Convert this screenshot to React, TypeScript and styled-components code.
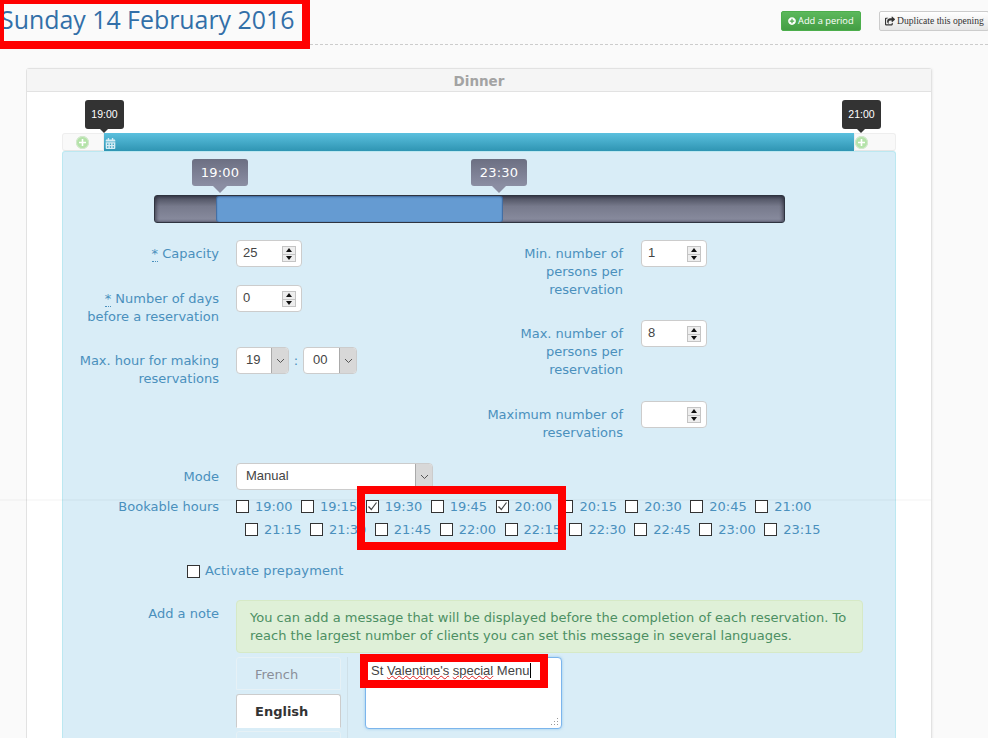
import React from "react";
import styled, { createGlobalStyle } from "styled-components";
import { FaCalendarAlt, FaPlusCircle, FaShareSquare } from "react-icons/fa";

const GlobalStyle = createGlobalStyle`
  html, body {
    margin: 0;
    padding: 0;
    background: #fafafa;
    overflow: hidden;
  }
  * {
    box-sizing: border-box;
  }
`;

const Page = styled.div`
  position: relative;
  width: 988px;
  height: 738px;
  overflow: hidden;
  background: #fafafa;
  font-family: "DejaVu Sans", Verdana, sans-serif;
  font-size: 13px;
  line-height: 18px;
`;

const Header = styled.div`
  display: flex;
  align-items: flex-start;
  height: 45px;
  border-bottom: 1px dashed #ccc;
`;

const Title = styled.h1`
  flex: 1;
  margin: 0;
  font-family: "Open Sans", sans-serif;
  font-size: 24.9px;
  font-weight: 400;
  line-height: 38px;
  color: #326fa8;
`;

const AddButton = styled.div`
  display: flex;
  align-items: center;
  gap: 2px;
  width: 80px;
  height: 20px;
  margin-top: 11px;
  padding-left: 6px;
  border: 1px solid #4cae4c;
  border-radius: 2px;
  background: linear-gradient(#5cb85c, #449d44);
  color: #fff;
  font-family: "Open Sans", sans-serif;
  font-size: 9.3px;
  white-space: nowrap;

  svg {
    flex: none;
  }
`;

const DuplicateButton = styled.div`
  display: flex;
  align-items: center;
  gap: 2px;
  width: 110px;
  height: 20px;
  margin: 11px -1px 0 18px;
  padding-left: 5px;
  border: 1px solid #ccc;
  border-radius: 2px;
  background: linear-gradient(#fff, #e6e6e6);
  color: #333;
  font-family: "Liberation Serif", serif;
  font-size: 9.6px;
  white-space: nowrap;

  svg {
    flex: none;
  }
`;

const Card = styled.div`
  width: 906px;
  margin: 23px 0 0 26px;
  border: 1px solid #e2e2e2;
  border-radius: 3px 3px 0 0;
  background: #fff;
  box-shadow: 1px 0 2px rgba(0, 0, 0, 0.05);
`;

const CardTitle = styled.div`
  height: 23px;
  border-bottom: 1px solid #e2e2e2;
  background: #f5f5f5;
  color: #a3a3a3;
  font-weight: 700;
  font-size: 13.5px;
  line-height: 25px;
  text-align: center;
`;

const CardBody = styled.div`
  padding: 41px 35px 0;
`;

const Timeline = styled.div`
  position: relative;
  display: flex;
  height: 18px;
`;

const TimelineEnd = styled.div<{ $side: "left" | "right" }>`
  display: flex;
  align-items: center;
  width: 42px;
  padding-left: ${({ $side }) => ($side === "left" ? "13px" : "0")};
  border: 1px solid #eee;
  border-bottom-color: #e6e6e6;
  border-radius: ${({ $side }) =>
    $side === "left" ? "3px 0 0 3px" : "0 3px 3px 0"};
  background: #f9f9f9;
`;

const PlusDot = styled.div`
  display: flex;
  align-items: center;
  justify-content: center;
  width: 13px;
  height: 13px;
  border-radius: 50%;
  background: #b4e3a9;
  box-shadow: 0 0 0 1px #d5e8d0 inset;
`;

const TimelineBar = styled.div`
  flex: 1;
  display: flex;
  align-items: center;
  padding: 2px 0 0 1px;
  background: linear-gradient(#5bc0de, #2f95b3);
  color: #d7edf5;
`;

const DarkTip = styled.div<{ $left: number }>`
  position: absolute;
  top: -33px;
  left: ${({ $left }) => $left}px;
  width: 39px;
  height: 29px;
  border-radius: 3px;
  background: #333;
  color: #fff;
  font-family: "Liberation Sans", Arial, sans-serif;
  font-size: 10.5px;
  line-height: 29px;
  text-align: center;

  &::after {
    content: "";
    position: absolute;
    left: 15px;
    bottom: -4px;
    border-style: solid;
    border-width: 4px 4px 0;
    border-color: #333 transparent transparent;
  }
`;

const Panel = styled.div`
  height: 600px;
  border: 1px solid #bce8f1;
  border-bottom: 0;
  border-radius: 3px 3px 0 0;
  background: #d9edf7;
`;

const Track = styled.div`
  position: relative;
  display: flex;
  width: 631px;
  height: 28px;
  margin: 43px 0 17px 91px;
  border: 1px solid #2f3440;
  border-radius: 3px;
  background: linear-gradient(#474a59, #777a8c 40%, #8a8da0);
  box-shadow: inset 2px 0 3px rgba(30, 32, 45, 0.45),
    inset -2px 0 3px rgba(30, 32, 45, 0.45);
`;

const TrackRange = styled.div`
  width: 287px;
  margin-left: 61px;
  border-radius: 3px;
  background: #659bd2;
  box-shadow: inset 0 1px 2px rgba(30, 60, 110, 0.5),
    inset 1px 0 1px rgba(30, 60, 110, 0.4),
    inset -1px 0 1px rgba(30, 60, 110, 0.4);
`;

const SliderTip = styled.div<{ $left: number }>`
  position: absolute;
  top: -37px;
  left: ${({ $left }) => $left}px;
  width: 56px;
  height: 27px;
  border-radius: 3px;
  background: linear-gradient(#6c6f82, #8b8ea3);
  color: #fff;
  font-size: 13px;
  line-height: 27px;
  letter-spacing: 0.2px;
  text-align: center;

  &::after {
    content: "";
    position: absolute;
    left: 21px;
    bottom: -7px;
    border-style: solid;
    border-width: 7px 7px 0;
    border-color: #8b8ea3 transparent transparent;
  }
`;

const Columns = styled.div`
  display: flex;
`;

const Column = styled.div<{ $width?: number }>`
  width: ${({ $width }) => ($width ? `${$width}px` : "auto")};
`;

const Row = styled.div<{ $mb?: number }>`
  display: flex;
  align-items: flex-start;
  margin-bottom: ${({ $mb }) => $mb ?? 22}px;
`;

const Label = styled.label<{ $width?: number; $pt?: number }>`
  flex: none;
  width: ${({ $width }) => $width ?? 156}px;
  padding-top: ${({ $pt }) => $pt ?? 5}px;
  color: #4a90bd;
  text-align: right;
`;

const Required = styled.abbr`
  border-bottom: 1px dotted #4a90bd;
  text-decoration: none;
`;

const Control = styled.div<{ $ml?: number }>`
  margin-left: ${({ $ml }) => $ml ?? 17}px;
`;

const NumberBox = styled.div`
  position: relative;
  width: 66px;
  height: 27px;
  padding-left: 6px;
  border: 1px solid #ccc;
  border-radius: 4px;
  background: #fff;
  color: #444;
  font-family: "Liberation Sans", Arial, sans-serif;
  font-size: 13px;
  line-height: 24px;
`;

const Spinner = styled.div`
  position: absolute;
  top: 5px;
  right: 5px;
  display: flex;
  flex-direction: column;
  gap: 1px;
  width: 14px;
  height: 16px;
  border: 1px solid #c4c4c4;
  background: #c4c4c4;
`;

const SpinButton = styled.div<{ $up?: boolean }>`
  flex: 1;
  display: flex;
  align-items: center;
  justify-content: center;
  background: #eee;

  &::after {
    content: "";
    border-style: solid;
    border-width: ${({ $up }) => ($up ? "0 3px 4px" : "4px 3px 0")};
    border-color: ${({ $up }) =>
      $up
        ? "transparent transparent #111"
        : "#111 transparent transparent"};
  }
`;

const SelectBox = styled.div<{ $width: number }>`
  display: flex;
  width: ${({ $width }) => $width}px;
  height: 27px;
  border: 1px solid #ccc;
  border-radius: 4px;
  overflow: hidden;
  background: #fff;
  color: #444;
  font-family: "Liberation Sans", Arial, sans-serif;
  font-size: 13px;
  line-height: 24px;
`;

const SelectValue = styled.div`
  flex: 1;
  padding-left: 9px;
`;

const SelectArrow = styled.div`
  display: flex;
  align-items: center;
  justify-content: center;
  width: 17px;
  border-left: 1px solid #aaa;
  background: #d8d8d8;
`;

const TimeSelects = styled.div`
  display: flex;
  align-items: center;
  color: #4a90bd;
`;

const Colon = styled.span`
  width: 14px;
  text-align: center;
`;

const HourRow = styled.div<{ $indent?: number }>`
  display: flex;
  height: 23px;
  padding-left: ${({ $indent }) => $indent ?? 0}px;
`;

const HourItem = styled.div`
  display: flex;
  align-items: center;
  gap: 6px;
  width: 64.9px;
  color: #4a90bd;
`;

const CheckBox = styled.span`
  display: flex;
  align-items: center;
  justify-content: center;
  flex: none;
  width: 13px;
  height: 13px;
  border: 1px solid #333;
  background: #fff;
`;

const PrepayRow = styled.div`
  display: flex;
  align-items: center;
  gap: 5px;
  height: 18px;
  margin: 21px 0 20px 124px;
  color: #4a90bd;
  letter-spacing: 0.1px;
`;

const NoteColumn = styled.div`
  width: 627px;
  margin-left: 17px;
`;

const Alert = styled.div`
  height: 53px;
  margin-bottom: 4px;
  padding: 8px 13px;
  border: 1px solid #d6e9c6;
  border-radius: 4px;
  background: #dff0d8;
  color: #4c8f63;
`;

const NoteEditor = styled.div`
  display: flex;
  align-items: flex-start;
`;

const Tabs = styled.div`
  display: flex;
  flex-direction: column;
  width: 105px;
`;

const Tab = styled.div<{ $active?: boolean; $h: number }>`
  height: ${({ $h }) => $h}px;
  margin-bottom: ${({ $active }) => ($active ? "3px" : "4px")};
  padding: 8px 0 0 18px;
  border: 1px solid ${({ $active }) => ($active ? "#ccc" : "#e6f1f6")};
  border-bottom-color: ${({ $active }) => ($active ? "#fff" : "#e6f1f6")};
  border-radius: 3px 3px 0 0;
  background: ${({ $active }) => ($active ? "#fff" : "transparent")};
  color: ${({ $active }) => ($active ? "#333" : "#8b8f99")};
  font-weight: ${({ $active }) => ($active ? 700 : 400)};
`;

const TabDivider = styled.div`
  align-self: stretch;
  width: 1px;
  height: 90px;
  margin: 0 17px 0 6px;
  background: #cfe0e8;
`;

const NoteArea = styled.div`
  position: relative;
  width: 197px;
  height: 72px;
  padding: 4px 5px;
  border: 1px solid #7cb5ec;
  border-radius: 4px;
  background: #fff;
  box-shadow: 0 0 3px rgba(102, 175, 233, 0.6);
  color: #444;
  font-family: "Liberation Sans", Arial, sans-serif;
  font-size: 13px;
  line-height: 18px;
  white-space: nowrap;
`;

const Misspelled = styled.span`
  text-decoration: underline wavy #e02020 1px;
  text-underline-offset: 0;
`;

const Caret = styled.span`
  display: inline-block;
  width: 1px;
  height: 15px;
  margin-left: 1px;
  background: #000;
  vertical-align: -3px;
`;

const ResizeGrip = styled.svg`
  position: absolute;
  right: 2px;
  bottom: 2px;
`;

const RedFrame = styled.div<{ $x: number; $y: number; $w: number; $h: number }>`
  position: absolute;
  left: ${({ $x }) => $x}px;
  top: ${({ $y }) => $y}px;
  width: ${({ $w }) => $w}px;
  height: ${({ $h }) => $h}px;
  border: 8px solid #f00;
  pointer-events: none;
`;

const Seam = styled.div`
  position: absolute;
  left: 0;
  top: 499px;
  width: 931px;
  height: 2px;
  background: rgba(0, 0, 0, 0.025);
  pointer-events: none;
`;

const firstHours = ["19:00", "19:15", "19:30", "19:45", "20:00", "20:15", "20:30", "20:45", "21:00"];
const secondHours = ["21:15", "21:30", "21:45", "22:00", "22:15", "22:30", "22:45", "23:00", "23:15"];
const checkedHours = ["19:30", "20:00"];

const Chevron = () => (
  <svg width="9" height="6" viewBox="0 0 9 6">
    <path d="M1 1l3.5 3.5L8 1" fill="none" stroke="#555" strokeWidth="1" />
  </svg>
);

const Tick = () => (
  <svg width="11" height="11" viewBox="0 0 11 11">
    <path d="M1.5 5.5l2.8 3L9.5 1.5" fill="none" stroke="#444" strokeWidth="1.2" />
  </svg>
);

const Plus = () => (
  <svg width="9" height="9" viewBox="0 0 9 9">
    <path d="M4.5 1v7M1 4.5h7" stroke="#fff" strokeWidth="1.6" />
  </svg>
);

const NumberInput = ({ value }: { value?: string }) => (
  <NumberBox>
    {value}
    <Spinner>
      <SpinButton $up />
      <SpinButton />
    </Spinner>
  </NumberBox>
);

const Hours = ({ hours, indent }: { hours: string[]; indent?: number }) => (
  <HourRow $indent={indent}>
    {hours.map((hour) => (
      <HourItem key={hour}>
        <CheckBox>{checkedHours.includes(hour) && <Tick />}</CheckBox>
        {hour}
      </HourItem>
    ))}
  </HourRow>
);

const App: React.FC = () => {
  return (
    <Page>
      <GlobalStyle />
      <Header>
        <Title>Sunday 14 February 2016</Title>
        <AddButton>
          <FaPlusCircle size={8} />
          Add a period
        </AddButton>
        <DuplicateButton>
          <FaShareSquare size={10} />
          Duplicate this opening
        </DuplicateButton>
      </Header>

      <Card>
        <CardTitle>Dinner</CardTitle>
        <CardBody>
          <Timeline>
            <TimelineEnd $side="left">
              <PlusDot>
                <Plus />
              </PlusDot>
            </TimelineEnd>
            <TimelineBar>
              <FaCalendarAlt size={11} />
            </TimelineBar>
            <TimelineEnd $side="right">
              <PlusDot>
                <Plus />
              </PlusDot>
            </TimelineEnd>
            <DarkTip $left={23}>19:00</DarkTip>
            <DarkTip $left={780}>21:00</DarkTip>
          </Timeline>

          <Panel>
            <Track>
              <TrackRange />
              <SliderTip $left={37}>19:00</SliderTip>
              <SliderTip $left={316}>23:30</SliderTip>
            </Track>

            <Columns>
              <Column $width={420}>
                <Row $mb={18}>
                  <Label>
                    <Required>*</Required> Capacity
                  </Label>
                  <Control>
                    <NumberInput value="25" />
                  </Control>
                </Row>
                <Row $mb={21}>
                  <Label>
                    <Required>*</Required> Number of days before a reservation
                  </Label>
                  <Control>
                    <NumberInput value="0" />
                  </Control>
                </Row>
                <Row>
                  <Label>Max. hour for making reservations</Label>
                  <Control>
                    <TimeSelects>
                      <SelectBox $width={53}>
                        <SelectValue>19</SelectValue>
                        <SelectArrow>
                          <Chevron />
                        </SelectArrow>
                      </SelectBox>
                      <Colon>:</Colon>
                      <SelectBox $width={54}>
                        <SelectValue>00</SelectValue>
                        <SelectArrow>
                          <Chevron />
                        </SelectArrow>
                      </SelectBox>
                    </TimeSelects>
                  </Control>
                </Row>
              </Column>
              <Column>
                <Row $mb={21}>
                  <Label $width={140}>Min. number of persons per reservation</Label>
                  <Control $ml={18}>
                    <NumberInput value="1" />
                  </Control>
                </Row>
                <Row $mb={22}>
                  <Label $width={140}>Max. number of persons per reservation</Label>
                  <Control $ml={18}>
                    <NumberInput value="8" />
                  </Control>
                </Row>
                <Row $mb={21}>
                  <Label $width={140}>Maximum number of reservations</Label>
                  <Control $ml={18}>
                    <NumberInput />
                  </Control>
                </Row>
              </Column>
            </Columns>

            <Row $mb={5}>
              <Label>Mode</Label>
              <Control>
                <SelectBox $width={197}>
                  <SelectValue>Manual</SelectValue>
                  <SelectArrow>
                    <Chevron />
                  </SelectArrow>
                </SelectBox>
              </Control>
            </Row>

            <Row $mb={0}>
              <Label $pt={3}>Bookable hours</Label>
              <Control>
                <Hours hours={firstHours} />
                <Hours hours={secondHours} indent={9} />
              </Control>
            </Row>

            <PrepayRow>
              <CheckBox />
              Activate prepayment
            </PrepayRow>

            <Row $mb={0}>
              <Label>Add a note</Label>
              <NoteColumn>
                <Alert>
                  You can add a message that will be displayed before the
                  completion of each reservation. To reach the largest number of
                  clients you can set this message in several languages.
                </Alert>
                <NoteEditor>
                  <Tabs>
                    <Tab $h={33}>French</Tab>
                    <Tab $h={34} $active>
                      English
                    </Tab>
                    <Tab $h={30} />
                  </Tabs>
                  <TabDivider />
                  <NoteArea>
                    St <Misspelled>Valentine's</Misspelled>{" "}
                    <Misspelled>special</Misspelled> Menu
                    <Caret />
                    <ResizeGrip width="9" height="9" viewBox="0 0 9 9">
                      <path d="M7 1h1v1H7zM4 4h1v1H4zM7 4h1v1H7zM1 7h1v1H1zM4 7h1v1H4zM7 7h1v1H7z" fill="#999" />
                    </ResizeGrip>
                  </NoteArea>
                </NoteEditor>
              </NoteColumn>
            </Row>
          </Panel>
        </CardBody>
      </Card>

      <Seam />
      <RedFrame $x={-4} $y={-4} $w={314} $h={53} />
      <RedFrame $x={357} $y={486} $w={209} $h={64} />
      <RedFrame $x={360} $y={654} $w={188} $h={34} />
    </Page>
  );
};

export default App;
